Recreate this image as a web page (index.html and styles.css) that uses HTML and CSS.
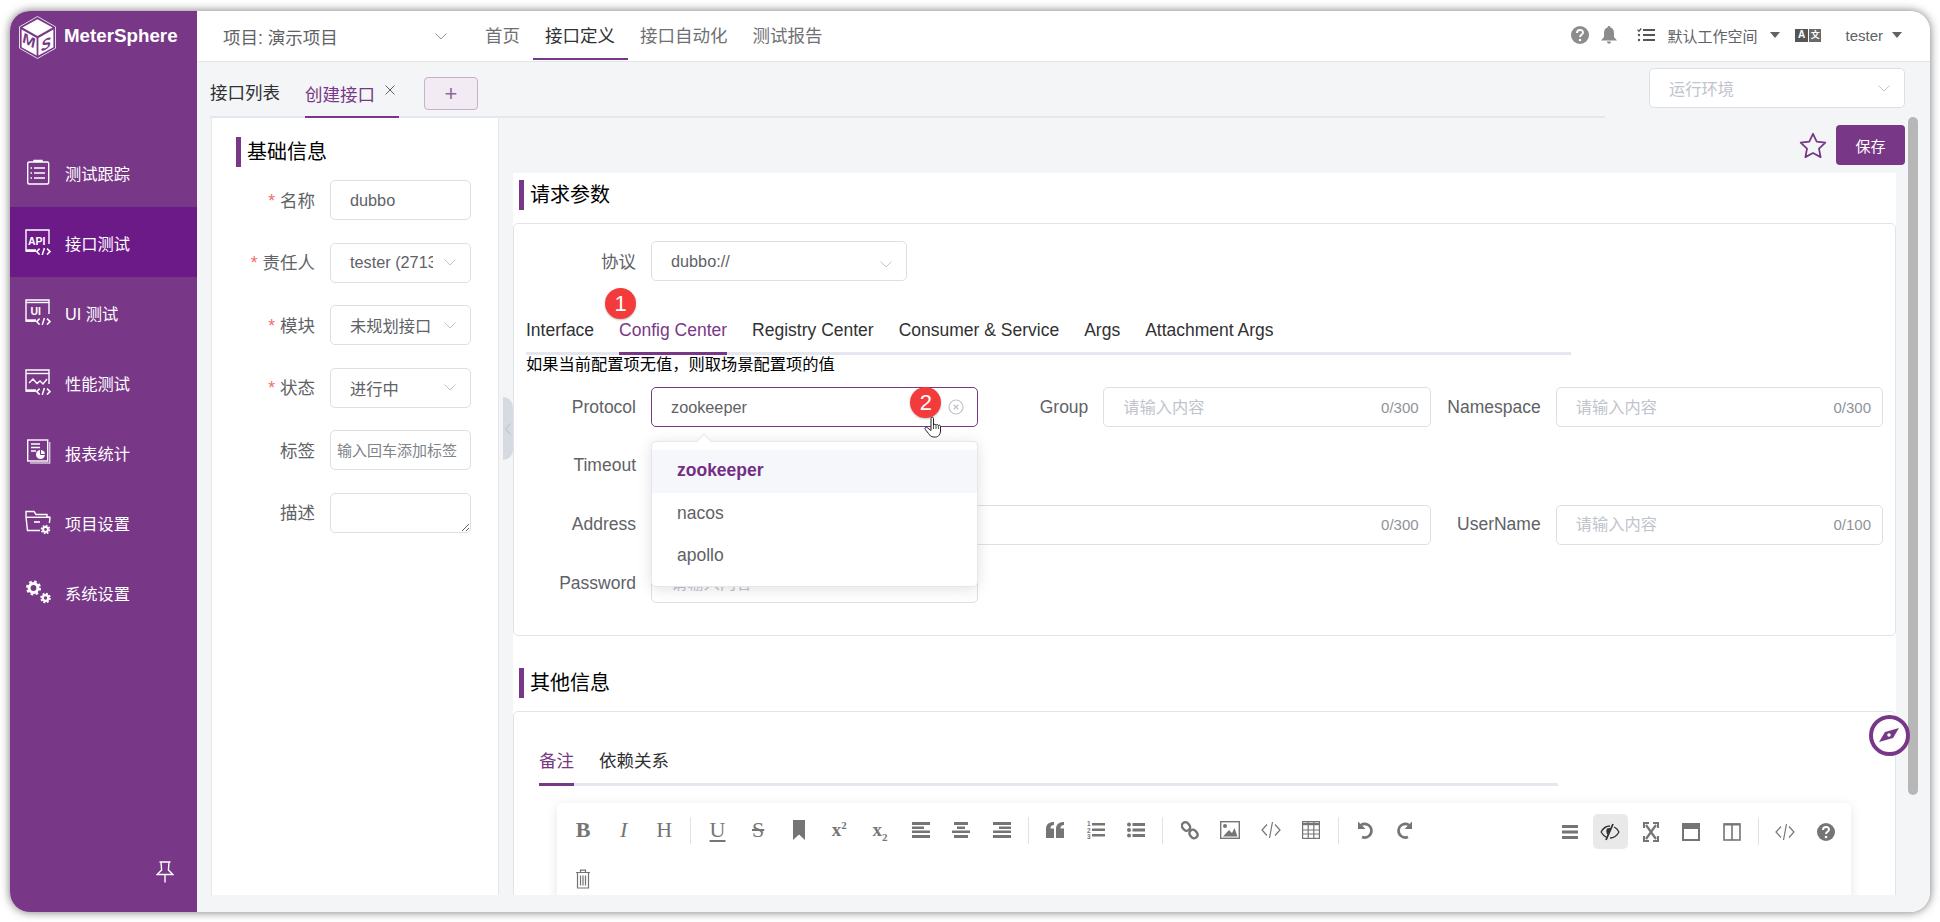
FILE: index.html
```html
<!DOCTYPE html>
<html>
<head>
<meta charset="utf-8">
<title>MeterSphere</title>
<link rel="stylesheet" href="styles.css">
</head>
<body>
<div class="window">
	<aside class="aside">
		<div class="logo">
			<svg class="logo-mark" viewBox="0 0 37 43" width="37" height="43">
				<path d="M18.5 .5 36.5 10.8V32.2L18.5 42.5 .5 32.2V10.8Z" fill="none" stroke="#fff" stroke-width=".8"/>
				<path d="M18.5 3.2 33.6 11.6 18.5 20 3.4 11.6Z" fill="#fff"/>
				<path d="M2.6 13.6 17.6 22V39.6L2.6 31.2Z" fill="#fff"/>
				<path d="M19.4 22 34.4 13.6V31.2L19.4 39.6Z" fill="#fff"/>
				<text transform="matrix(1 .56 0 1 3.6 26)" class="logo-letter">M</text>
				<text transform="matrix(1 -.56 0 1 22 36)" class="logo-letter">S</text>
			</svg>
			<span class="logo-text">MeterSphere</span>
		</div>
		<nav class="side-menu">
			<a class="side-item">
				<svg viewBox="0 0 26 26" width="26" height="26" fill="none" stroke="#fff" stroke-width="1.4">
					<rect x="2.7" y="3" width="21" height="22" rx="1.5"/>
					<path d="M9 3V1.4H17V3" fill="#fff"/>
					<path d="M9 9H20M9 14H20M9 19H20M5.5 9H7M5.5 14H7M5.5 19H7"/>
				</svg>
				<span>测试跟踪</span>
			</a>
			<a class="side-item active">
				<svg viewBox="0 0 26 26" width="26" height="26" fill="none" stroke="#fff" stroke-width="1.4">
					<path d="M10 22H1V1H24V15"/>
					<path d="M1 21.5H11" stroke-width="2.4"/>
					<text x="3" y="15.500" class="side-glyph">API</text>
					<path d="M14.6 19.6 11.6 22.6 14.6 25.6M22 19.6 25 22.6 22 25.6M19.4 19 17.2 26" stroke-width="1.5"/>
				</svg>
				<span>接口测试</span>
			</a>
			<a class="side-item">
				<svg viewBox="0 0 26 26" width="26" height="26" fill="none" stroke="#fff" stroke-width="1.4">
					<path d="M10 22H1V1H24V15"/>
					<path d="M1 3.500H24"/>
					<path d="M1 21.5H11" stroke-width="2.4"/>
					<text x="5.500" y="16" class="side-glyph">UI</text>
					<path d="M14.6 19.6 11.6 22.6 14.6 25.6M22 19.6 25 22.6 22 25.6M19.4 19 17.2 26" stroke-width="1.5"/>
				</svg>
				<span>UI 测试</span>
			</a>
			<a class="side-item">
				<svg viewBox="0 0 26 26" width="26" height="26" fill="none" stroke="#fff" stroke-width="1.4">
					<path d="M10 22H1V1H24V15"/>
					<path d="M1 4.5H24"/>
					<path d="M1 21.5H11" stroke-width="2.4"/>
					<path d="M4 14 8 10 12 14.5 15 12 18 15 22 10"/>
					<path d="M14.6 19.6 11.6 22.6 14.6 25.6M22 19.6 25 22.6 22 25.6M19.4 19 17.2 26" stroke-width="1.5"/>
				</svg>
				<span>性能测试</span>
			</a>
			<a class="side-item">
				<svg viewBox="0 0 26 26" width="26" height="26" fill="none" stroke="#fff" stroke-width="1.4">
					<rect x="2.7" y="1" width="20" height="21"/>
					<path d="M24.7 3V24H5" stroke-opacity=".7"/>
					<path d="M6 5H15M6 8.5H15M6 12H11"/>
					<circle cx="15.5" cy="15.5" r="4.5" fill="#fff" stroke="none"/>
					<path d="M15.5 15.5V11M15.5 15.5H20" stroke="#783887" stroke-width="1"/>
				</svg>
				<span>报表统计</span>
			</a>
			<a class="side-item">
				<svg viewBox="0 0 26 26" width="26" height="26" fill="none" stroke="#fff" stroke-width="1.4">
					<path d="M15 21.5H2.5L1 8V2.5H9L11 5.5H22V8L25 8.4 24.4 14"/>
					<path d="M1 8.3H25"/>
					<path d="M9 13H15" stroke-width="1.6"/>
					<circle cx="20.5" cy="20.5" r="2.4" stroke-width="2"/>
					<circle cx="20.5" cy="20.5" r="4" stroke-width="1.6" stroke-dasharray="1.7 1.4"/>
				</svg>
				<span>项目设置</span>
			</a>
			<a class="side-item">
				<svg viewBox="0 0 26 26" width="26" height="26" fill="none" stroke="#fff">
					<circle cx="8.5" cy="9" r="4.4" stroke-width="3"/>
					<circle cx="8.5" cy="9" r="6.4" stroke-width="2.2" stroke-dasharray="2.6 2.4"/>
					<circle cx="20.5" cy="19" r="2.8" stroke-width="2.2"/>
					<circle cx="20.5" cy="19" r="4.4" stroke-width="1.8" stroke-dasharray="1.9 1.55"/>
				</svg>
				<span>系统设置</span>
			</a>
		</nav>
		<div class="pin">
			<svg viewBox="0 0 18 22" width="18" height="22" fill="none" stroke="#fff" stroke-width="1.4">
				<path d="M3.5 1H14.5M5 1 5.6 9 1.2 13.5H16.8L12.4 9 13 1M9 13.5V21.5"/>
			</svg>
		</div>
	</aside>

	<div class="main">
		<header class="topbar">
			<div class="project">
				<span>项目: 演示项目</span>
				<svg class="chevron" viewBox="0 0 12 7" width="12" height="7"><path d="M.5 .5 6 6 11.5 .5"/></svg>
			</div>
			<nav class="top-nav">
				<a class="top-item">首页</a>
				<a class="top-item active">接口定义</a>
				<a class="top-item">接口自动化</a>
				<a class="top-item">测试报告</a>
			</nav>
			<div class="top-right">
				<svg class="ic-help" viewBox="0 0 18 18" width="18" height="18">
					<circle cx="9" cy="9" r="9" fill="#8c8c8c"/>
					<path d="M6 7c0-4 6-4 6-.4 0 2.200-3 2.200-3 4.400" fill="none" stroke="#fff" stroke-width="2"/>
					<circle cx="9" cy="14" r="1.300" fill="#fff"/>
				</svg>
				<svg class="ic-bell" viewBox="0 0 16 18" width="16" height="18">
					<path d="M8 0C9 0 9.500 .6 9.500 1.500 12 2.200 13 4.500 13 7V11L16 14.500H0L3 11V7C3 4.500 4 2.200 6.500 1.500 6.500 .6 7 0 8 0ZM6 15.500H10C10 18.500 6 18.500 6 15.500Z" fill="#8c8c8c"/>
				</svg>
				<svg class="ic-check" viewBox="0 0 18 14" width="18" height="14" stroke="#555" fill="none">
					<path d="M6 2H18M6 7H18M6 12H18" stroke-width="1.800"/>
					<path d="M.5 1.800 2 3.200 4.200 .5" stroke-width="1.300"/>
					<circle cx="2" cy="7" r="1.200" fill="#555" stroke="none"/>
					<circle cx="2" cy="12" r="1.200" fill="#555" stroke="none"/>
				</svg>
				<span class="top-text workspace">默认工作空间</span>
				<i class="caret caret-workspace"></i>
				<div class="lang">
					<span class="lang-a">A</span><span class="lang-b">文</span>
				</div>
				<span class="top-text user">tester</span>
				<i class="caret caret-user"></i>
			</div>
		</header>

		<div class="content">
			<div class="tabs-row">
				<div class="api-tabs">
					<a class="api-tab">接口列表</a>
					<a class="api-tab active">创建接口<svg class="tab-close" viewBox="0 0 10 10" width="10" height="10"><path d="M.5 .5 9.500 9.500M9.500 .5 .5 9.500" stroke="#606266"/></svg></a>
					<button class="add-btn" type="button">+</button>
				</div>
				<div class="select env-select">
					<span class="select-value placeholder">运行环境</span>
					<svg class="chevron" viewBox="0 0 12 7" width="12" height="7"><path d="M.5 .5 6 6 11.5 .5"/></svg>
				</div>
			</div>

			<div class="work">
				<section class="base-info">
					<h3 class="section-title">基础信息</h3>
					<div class="base-form">
						<div class="base-row">
							<label class="base-label required">名称</label>
							<div class="input"><input type="text" value="dubbo"></div>
						</div>
						<div class="base-row">
							<label class="base-label required">责任人</label>
							<div class="select">
								<span class="select-value">tester (27131313)</span>
								<svg class="chevron" viewBox="0 0 12 7" width="12" height="7"><path d="M.5 .5 6 6 11.5 .5"/></svg>
							</div>
						</div>
						<div class="base-row">
							<label class="base-label required">模块</label>
							<div class="select">
								<span class="select-value">未规划接口</span>
								<svg class="chevron" viewBox="0 0 12 7" width="12" height="7"><path d="M.5 .5 6 6 11.5 .5"/></svg>
							</div>
						</div>
						<div class="base-row">
							<label class="base-label required">状态</label>
							<div class="select">
								<span class="select-value">进行中</span>
								<svg class="chevron" viewBox="0 0 12 7" width="12" height="7"><path d="M.5 .5 6 6 11.5 .5"/></svg>
							</div>
						</div>
						<div class="base-row">
							<label class="base-label">标签</label>
							<div class="input tag-input"><input type="text" placeholder="输入回车添加标签"></div>
						</div>
						<div class="base-row">
							<label class="base-label">描述</label>
							<textarea class="desc"></textarea>
						</div>
					</div>
				</section>

				<div class="gutter">
					<div class="collapse">
						<svg viewBox="0 0 6 12" width="6" height="12"><path d="M5.500 .5 .5 6 5.500 11.500" fill="none" stroke="#b4bac2"/></svg>
					</div>
				</div>

				<div class="detail">
					<div class="detail-head">
						<svg class="star" viewBox="0 0 28 27" width="28" height="27">
							<path d="M14 1.800 17.700 9.600 26.300 10.700 20 16.600 21.600 25.100 14 21 6.400 25.100 8 16.600 1.700 10.700 10.300 9.600Z" fill="none" stroke="#783887" stroke-width="1.800" stroke-linejoin="round"/>
						</svg>
						<button class="save-btn" type="button">保存</button>
					</div>

					<div class="panel">
						<h3 class="section-title">请求参数</h3>
						<div class="card params">
							<div class="protocol-row">
								<label class="form-label">协议</label>
								<div class="select protocol-select">
									<span class="select-value">dubbo://</span>
									<svg class="chevron low" viewBox="0 0 12 7" width="12" height="7"><path d="M.5 .5 6 6 11.5 .5"/></svg>
								</div>
							</div>

							<div class="tabs param-tabs">
								<a class="tab">Interface</a>
								<a class="tab active">Config Center<span class="badge badge-one">1</span></a>
								<a class="tab">Registry Center</a>
								<a class="tab">Consumer &amp; Service</a>
								<a class="tab">Args</a>
								<a class="tab">Attachment Args</a>
							</div>
							<p class="note">如果当前配置项无值，则取场景配置项的值</p>

							<div class="param-grid">
								<div class="field">
									<label class="form-label">Protocol</label>
									<div class="control">
										<div class="select focused">
											<span class="select-value">zookeeper</span>
											<svg class="clear" viewBox="0 0 16 16" width="16" height="16" fill="none" stroke="#c0c4cc">
												<circle cx="8" cy="8" r="7" stroke-width="1.200"/>
												<path d="M5.700 5.700 10.300 10.300M10.300 5.700 5.700 10.300" stroke-width="1.300"/>
											</svg>
										</div>
										<span class="badge badge-two">2</span>
										<svg class="hand" viewBox="0 0 18 22" width="18" height="22">
											<path d="M7 2.500C7 .8 9.500 .8 9.500 2.500V9C9.800 8 11.700 8 12 9.200 12.400 8.200 14.200 8.300 14.400 9.600 14.900 8.800 16.500 9.100 16.500 10.600V15C16.500 18 14.500 21 11.500 21H9.500C7 21 6 19.500 4.500 17.500L1.200 13.300C.2 11.800 2.200 10.600 3.400 11.800L7 14.500Z" fill="#fff" stroke="#222" stroke-width="1"/>
											<path d="M9.500 9V13M12 9.200V13M14.400 9.600V13" stroke="#222" stroke-width=".8"/>
										</svg>
										<ul class="dropdown">
											<li class="selected">zookeeper</li>
											<li>nacos</li>
											<li>apollo</li>
										</ul>
									</div>
								</div>
								<div class="field">
									<label class="form-label">Group</label>
									<div class="control input"><input type="text" placeholder="请输入内容"><span class="count">0/300</span></div>
								</div>
								<div class="field">
									<label class="form-label">Namespace</label>
									<div class="control input"><input type="text" placeholder="请输入内容"><span class="count">0/300</span></div>
								</div>

								<div class="field full-row">
									<label class="form-label">Timeout</label>
									<div class="control input timeout"><input type="text"></div>
								</div>

								<div class="field wide">
									<label class="form-label">Address</label>
									<div class="control input"><input type="text" placeholder="请输入内容"><span class="count">0/300</span></div>
								</div>
								<div class="field">
									<label class="form-label">UserName</label>
									<div class="control input"><input type="text" placeholder="请输入内容"><span class="count">0/100</span></div>
								</div>

								<div class="field full-row">
									<label class="form-label">Password</label>
									<div class="control input timeout"><input type="text" placeholder="请输入内容"></div>
								</div>
							</div>
						</div>

						<h3 class="section-title">其他信息</h3>
						<div class="card others">
							<div class="tabs other-tabs">
								<a class="tab active">备注</a>
								<a class="tab">依赖关系</a>
							</div>
							<div class="editor">
								<div class="toolbar">
									<div class="tools-left">
										<div class="tool-row">
											<span class="tool serif bold">B</span>
											<span class="tool serif italic">I</span>
											<span class="tool serif">H</span>
											<i class="tool-sep"></i>
											<span class="tool serif under">U</span>
											<span class="tool serif strike">S</span>
											<span class="tool"><svg viewBox="0 0 14 20" width="14" height="20"><path d="M1 0H13V20L7 14.500 1 20Z" fill="#757575"/></svg></span>
											<span class="tool serif script"><span>x<sup>2</sup></span></span>
											<span class="tool serif script"><span>x<sub>2</sub></span></span>
											<span class="tool"><svg viewBox="0 0 18 18" width="18" height="18" fill="#757575"><path d="M0 1H18V4H0ZM0 5.500H12V8H0ZM0 9.500H18V12H0ZM0 14H18V17H0Z"/></svg></span>
											<span class="tool"><svg viewBox="0 0 18 18" width="18" height="18" fill="#757575"><path d="M2 1H16V4H2ZM5 5.500H13V8H5ZM0 9.500H18V12H0ZM2 14H16V17H2Z"/></svg></span>
											<span class="tool"><svg viewBox="0 0 18 18" width="18" height="18" fill="#757575"><path d="M0 1H18V4H0ZM6 5.500H18V8H6ZM0 9.500H18V12H0ZM0 14H18V17H0Z"/></svg></span>
											<i class="tool-sep"></i>
											<span class="tool"><svg viewBox="0 0 18 16" width="18" height="16" fill="#757575"><path d="M8 0V3C5.500 3 4.500 4.500 4.500 6.500H8V16H0V7C0 2.500 3 0 8 0ZM18 0V3C15.500 3 14.500 4.500 14.500 6.500H18V16H10V7C10 2.500 13 0 18 0Z"/></svg></span>
											<span class="tool"><svg viewBox="0 0 18 20" width="18" height="20" fill="#757575"><path d="M5 3H18V5.500H5ZM5 8.500H18V11H5ZM5 14H18V16.500H5Z"/><text x="0" y="6" class="ol-num">1</text><text x="0" y="12.500" class="ol-num">2</text><text x="0" y="19" class="ol-num">3</text></svg></span>
											<span class="tool"><svg viewBox="0 0 18 16" width="18" height="16" fill="#757575"><circle cx="2" cy="2.500" r="2"/><circle cx="2" cy="8" r="2"/><circle cx="2" cy="13.500" r="2"/><path d="M5.500 1H18V4H5.500ZM5.500 6.500H18V9.500H5.500ZM5.500 12H18V15H5.500Z"/></svg></span>
											<i class="tool-sep"></i>
											<span class="tool"><svg viewBox="0 0 18 20" width="18" height="20" fill="none" stroke="#757575" stroke-width="2.400"><rect x="1.500" y="2" width="7" height="9" rx="3.500" transform="rotate(-40 5 6.500)"/><rect x="9" y="9.500" width="7" height="9" rx="3.500" transform="rotate(-40 12.500 14)"/></svg></span>
											<span class="tool"><svg viewBox="0 0 20 18" width="20" height="18"><rect x=".7" y=".7" width="18.600" height="16.600" fill="none" stroke="#757575" stroke-width="1.400"/><circle cx="5" cy="5" r="2" fill="#757575"/><path d="M3 15.500 9 9 12 12 14.500 7 17.500 15.500Z" fill="#757575"/></svg></span>
											<span class="tool"><svg viewBox="0 0 20 18" width="20" height="18" fill="none" stroke="#757575" stroke-width="1.200"><path d="M6 3.500 1 9 6 14.500M14 3.500 19 9 14 14.500M11.500 1 8.500 17"/></svg></span>
											<span class="tool"><svg viewBox="0 0 18 18" width="18" height="18" fill="none" stroke="#757575" stroke-width="1.200"><rect x=".6" y=".6" width="16.800" height="16.800"/><path d="M.6 3H17.400" stroke-width="2.400"/><path d="M.6 9H17.400M.6 13H17.400M6.200 .6V17.400M11.800 .6V17.400"/></svg></span>
											<i class="tool-sep"></i>
											<span class="tool"><svg viewBox="0 0 16 18" width="16" height="18"><path d="M4 4A6.800 6.800 0 1 1 5 16" fill="none" stroke="#757575" stroke-width="2.600"/><path d="M1 .5V8H8.500Z" fill="#757575"/></svg></span>
											<span class="tool"><svg viewBox="0 0 16 18" width="16" height="18"><path d="M12 4A6.800 6.800 0 1 0 11 16" fill="none" stroke="#757575" stroke-width="2.600"/><path d="M15 .5V8H7.500Z" fill="#757575"/></svg></span>
										</div>
										<div class="tool-row trash-row">
											<span class="tool"><svg viewBox="0 0 14 20" width="14" height="20" fill="none" stroke="#757575" stroke-width="1.200"><path d="M0 3.500H14M4.500 3.500V1.200H9.500V3.500"/><path d="M1.500 3.500V19H12.500V3.500"/><path d="M4.500 6.500V16.500M7 6.500V16.500M9.500 6.500V16.500"/></svg></span>
										</div>
									</div>
									<div class="tools-right">
										<span class="tool"><svg viewBox="0 0 16 16" width="16" height="16" fill="#757575"><path d="M0 1H16V4H0ZM0 6.500H16V9.500H0ZM0 12H16V15H0Z"/></svg></span>
										<span class="tool on"><svg viewBox="0 0 20 18" width="20" height="18" fill="none" stroke="#333" stroke-width="1.300"><path d="M1 9C4 3.500 8 3 10 3M19 9C16 14.500 12 15 10 15"/><path d="M1 9C3 12.500 5.500 14 7.500 14.800M19 9C17.500 6 15.500 4.500 14 4" /><path d="M13 1 6 17" stroke-width="1.800"/><path d="M7 5.500C6 7 6 10 7.500 12L11 5C9.500 4.800 8 4.800 7 5.500Z" fill="#333" stroke="none"/></svg></span>
										<span class="tool"><svg viewBox="0 0 16 20" width="16" height="20" fill="none" stroke="#757575" stroke-width="2.200"><path d="M3 3 13 17M13 3 3 17"/><path d="M1 6V1H6M10 1H15V6M1 14V19H6M10 19H15V14" stroke-width="2"/></svg></span>
										<span class="tool"><svg viewBox="0 0 18 18" width="18" height="18"><rect x="1" y="1" width="16" height="16" fill="none" stroke="#757575" stroke-width="2"/><path d="M1 1H17V6H1Z" fill="#757575"/></svg></span>
										<span class="tool"><svg viewBox="0 0 18 18" width="18" height="18" fill="none" stroke="#757575" stroke-width="1.600"><rect x="1" y="1" width="16" height="16"/><path d="M1 1.500H17" stroke-width="2"/><path d="M9 1V17"/></svg></span>
										<i class="tool-sep"></i>
										<span class="tool"><svg viewBox="0 0 20 18" width="20" height="18" fill="none" stroke="#757575" stroke-width="1.200"><path d="M6 3.500 1 9 6 14.500M14 3.500 19 9 14 14.500M11.500 1 8.500 17"/></svg></span>
										<span class="tool"><svg viewBox="0 0 18 18" width="18" height="18"><circle cx="9" cy="9" r="9" fill="#757575"/><path d="M6 7c0-4 6-4 6-.4 0 2.200-3 2.200-3 4.400" fill="none" stroke="#fff" stroke-width="2"/><circle cx="9" cy="14" r="1.300" fill="#fff"/></svg></span>
									</div>
								</div>
							</div>
						</div>
					</div>
				</div>
			</div>
		</div>
	</div>

	<div class="scroll-thumb"></div>
	<div class="compass">
		<svg viewBox="0 0 20 14" width="20" height="14"><path d="M20 0 14 10 0 14 6 4Z" fill="#783887"/><circle cx="10" cy="7" r="1.800" fill="#fff"/></svg>
	</div>
</div>
</body>
</html>
```
FILE: styles.css
```css
* { box-sizing: border-box; }
html, body {
	margin: 0;
	height: 100%;
	overflow: hidden;
	background: #fff;
}
body {
	font-family: "Liberation Sans", "Noto Sans CJK SC", sans-serif;
	font-size: 16.25px;
	color: #606266;
	padding: 11px 10px 10px;
}
a { color: inherit; text-decoration: none; }
h3, p, ul { margin: 0; padding: 0; }
input, textarea, button { font-family: inherit; }

.window {
	position: relative;
	display: flex;
	height: 901px;
	border-radius: 20px;
	overflow: hidden;
	box-shadow: 0 0 10px rgba(0,0,0,0.55);
}

/* sidebar */
.aside {
	flex: 0 0 187px;
	display: flex;
	flex-direction: column;
	background: #783887;
	color: #fff;
}
.logo {
	display: flex;
	align-items: center;
	height: 50px;
	padding-left: 9px;
}
.logo-mark { margin-top: 3px; }
.logo-letter {
	font-size: 15px;
	font-weight: bold;
	font-style: italic;
	fill: #783887;
}
.logo-text {
	margin-left: 8px;
	margin-top: -1px;
	font-size: 18.75px;
	font-weight: bold;
}
.side-menu { margin-top: 76px; }
.side-item {
	display: flex;
	align-items: center;
	gap: 14px;
	height: 70px;
	padding-left: 15px;
}
.side-item span { margin-top: 2px; }
.side-item.active { background: #6c1a88; }
.side-glyph {
	font-size: 10.5px;
	font-weight: bold;
	fill: #fff;
	stroke: none;
}
.pin {
	margin-top: auto;
	padding: 0 0 29px 146px;
	line-height: 0;
}

/* top bar */
.main {
	flex: 1;
	min-width: 0;
	display: flex;
	flex-direction: column;
}
.topbar {
	flex: 0 0 51px;
	display: flex;
	background: #fff;
	border-bottom: 1px solid #e6e6e6;
	padding-left: 26px;
}
.project {
	flex: 0 0 223.500px;
	display: flex;
	align-items: center;
	justify-content: space-between;
	height: 50px;
	margin-right: 26px;
	font-size: 17.5px;
}
.project .chevron { stroke: #909399; }
.top-nav { display: flex; }
.top-item {
	height: 49px;
	line-height: 50px;
	padding: 0 12.5px;
	font-size: 17.5px;
	color: #6f7073;
}
.top-item.active {
	color: #303133;
	border-bottom: 2px solid #783887;
}
.top-right {
	display: flex;
	align-items: center;
	height: 48px;
	margin-left: auto;
	padding-right: 28px;
}
.ic-bell { margin-left: 12px; }
.ic-check { margin-left: 20px; }
.top-text { font-size: 15px; color: #606266; }
.workspace { margin-left: 12px; }
.caret {
	width: 0;
	height: 0;
	border-left: 5px solid transparent;
	border-right: 5px solid transparent;
	border-top: 6px solid #606266;
}
.caret-workspace { margin-left: 13px; }
.caret-user { margin-left: 9px; }
.lang {
	display: flex;
	gap: 1px;
	margin-left: 15px;
	margin-right: -1px;
	font-size: 10px;
	font-weight: bold;
	color: #fff;
	line-height: 12px;
}
.lang-a, .lang-b {
	width: 12.5px;
	height: 13px;
	text-align: center;
	background: #555;
}
.lang-b { background: #6a6a6a; font-size: 9px; }
.user { margin-left: 25px; }

/* content */
.content {
	flex: 1;
	min-height: 0;
	display: flex;
	flex-direction: column;
	background: #f4f5f7;
	padding: 0 0 17px 13px;
}
.tabs-row {
	flex: 0 0 56px;
	display: flex;
}
.api-tabs {
	flex: 0 0 1395px;
	display: flex;
	align-items: flex-start;
	height: 56px;
	border-bottom: 2px solid #e4e7ed;
}
.api-tab {
	height: 56px;
	line-height: 63px;
	margin-right: 25px;
	font-size: 17.5px;
	color: #303133;
}
.api-tab.active {
	padding-right: 4px;
	color: #783887;
	border-bottom: 2px solid #783887;
	line-height: 66px;
}
.tab-close {
	margin-left: 10px;
	vertical-align: 6px;
}
.add-btn {
	width: 54px;
	height: 33px;
	margin-top: 15px;
	padding: 0;
	background: #f2ebf4;
	border: 1px solid #c9afcf;
	border-radius: 4px;
	font-size: 22px;
	font-weight: normal;
	line-height: 28px;
	color: #93689c;
}
.env-select {
	flex: 0 0 256px;
	margin: 6px 0 0 44px;
}
.placeholder { color: #c0c4cc; }

.work {
	flex: 1;
	min-height: 0;
	display: flex;
	padding-left: 1px;
}
.section-title {
	height: 30px;
	line-height: 30px;
	margin: 0 0 13px 6px;
	padding-left: 6px;
	border-left: 5px solid #783887;
	font-size: 20px;
	font-weight: normal;
	color: #000;
}

/* base info */
.base-info {
	flex: 0 0 288px;
	min-width: 0;
	background: #fff;
	border-left: 1px solid #e6e6e6;
	border-right: 1px solid #e6e6e6;
	padding-top: 19px;
}
.base-info .section-title { margin-left: 24px; }
.base-form {
	display: flex;
	flex-direction: column;
	gap: 22.5px;
}
.base-row {
	display: flex;
	align-items: center;
	gap: 15px;
}
.base-row .input, .base-row .select, .desc { flex: 0 0 141px; }
.base-label {
	flex: 0 0 103px;
	margin-top: -2px;
	text-align: right;
	font-size: 17.5px;
}
.required::before {
	content: "*";
	color: #f56c6c;
	margin-right: 5px;
}
.input, .select {
	display: flex;
	align-items: center;
	min-width: 0;
	height: 40px;
	background: #fff;
	border: 1px solid #dcdfe6;
	border-radius: 5px;
}
.input input {
	flex: 1;
	width: 0;
	min-width: 0;
	height: 100%;
	padding: 0 19px;
	border: none;
	outline: none;
	background: transparent;
	font-size: 16.25px;
	color: #606266;
}
.input input::placeholder { color: #c0c4cc; }
.tag-input input { padding: 0 6px; font-size: 15px; }
.tag-input input::placeholder { color: #808389; }
.select { padding: 0 14px 0 19px; }
.select-value {
	flex: 1;
	min-width: 0;
	overflow: hidden;
	white-space: nowrap;
	margin-right: 11px;
}
.chevron {
	flex: none;
	fill: none;
	stroke: #c0c4cc;
}
.chevron.low { margin-top: 6px; }
.desc {
	height: 40px;
	min-width: 0;
	padding: 6px 10px;
	border: 1px solid #dcdfe6;
	border-radius: 5px;
	outline: none;
	resize: vertical;
}

.gutter { flex: 0 0 14px; }
.collapse {
	display: flex;
	align-items: center;
	justify-content: center;
	width: 10px;
	height: 63px;
	margin: 279px 0 0 4px;
	background: #d5dbe0;
	border-radius: 0 10px 10px 0;
}

/* detail column */
.detail {
	flex: 1;
	min-width: 0;
	display: flex;
	flex-direction: column;
	padding-right: 34px;
}
.detail-head {
	flex: 0 0 55px;
	display: flex;
	align-items: flex-start;
	justify-content: flex-end;
	padding-top: 7px;
	margin-right: -9px;
}
.star { margin: 7px 9px 0 0; }
.save-btn {
	width: 69px;
	height: 40px;
	background: #783887;
	border: none;
	border-radius: 4px;
	font-size: 15px;
	color: #fff;
}
.panel {
	flex: 1;
	min-height: 0;
	overflow: hidden;
	background: #fff;
	padding-top: 7px;
}
.card {
	border: 1px solid #e1e3ea;
	border-radius: 5px;
}
.params {
	padding: 17px 12px 32px;
	margin-bottom: 32px;
}
.form-label {
	flex: 0 0 110px;
	text-align: right;
	font-size: 17.5px;
}
.protocol-row {
	display: flex;
	align-items: center;
	gap: 15px;
}
.protocol-row .form-label { margin-top: -2px; }
.protocol-select { flex: 0 0 256px; }

.tabs {
	display: flex;
	gap: 25px;
	border-bottom: 3px solid #e4e7ed;
}
.param-tabs {
	width: 1045px;
	margin-top: 25px;
}
.tab {
	position: relative;
	height: 46px;
	line-height: 48px;
	font-size: 17.5px;
	color: #303133;
}
.tab.active { color: #783887; }
.tab.active::after {
	content: "";
	position: absolute;
	left: 0;
	right: 0;
	bottom: -3px;
	height: 3px;
	background: #783887;
}
.badge {
	position: absolute;
	display: block;
	width: 31px;
	height: 31px;
	border-radius: 50%;
	background: #f33b3b;
	color: #fff;
	font-size: 22px;
	font-weight: normal;
	line-height: 31px;
	text-align: center;
	box-shadow: 0 1px 2px rgba(0,0,0,0.25);
	z-index: 3;
}
.badge-one { left: -14px; top: -18px; }
.badge-two { right: 37px; top: 0; }
.hand {
	position: absolute;
	left: 273px;
	top: 29px;
	z-index: 4;
}
.note {
	line-height: 19px;
	font-size: 16.25px;
	color: #000;
}
.param-grid {
	display: grid;
	grid-template-columns: repeat(3, minmax(0, 1fr));
	row-gap: 18.75px;
	margin-top: 13px;
}
.field {
	display: flex;
	align-items: center;
	gap: 15px;
}
.field.wide { grid-column: span 2; }
.field.full-row { grid-column: 1 / -1; }
.control {
	position: relative;
	flex: 1;
	min-width: 0;
}
.timeout { flex: 0 0 327px; }
.select.focused { border-color: #783887; padding-right: 8px; }
.clear { flex: none; margin-right: 5px; }
.count {
	flex: none;
	padding-right: 11px;
	font-size: 15px;
	color: #909399;
}
.dropdown {
	position: absolute;
	left: 0;
	right: 0;
	top: 54px;
	padding: 8px 0;
	list-style: none;
	background: #fff;
	border: 1px solid #e4e7ed;
	border-radius: 5px;
	box-shadow: 0 2px 15px rgba(0,0,0,0.12);
	z-index: 2;
}
.dropdown::before {
	content: "";
	position: absolute;
	left: 46px;
	top: -6px;
	width: 11px;
	height: 11px;
	background: #fff;
	border-top: 1px solid #e4e7ed;
	border-left: 1px solid #e4e7ed;
	transform: rotate(45deg);
}
.dropdown li {
	position: relative;
	height: 42.5px;
	line-height: 41px;
	padding-left: 25px;
	font-size: 17.5px;
}
.dropdown li.selected {
	background: #f5f7fa;
	color: #742e86;
	font-weight: bold;
}

/* second card */
.others {
	padding: 25px 0 0 25px;
	height: 400px;
}
.other-tabs { width: 1019px; }
.editor {
	width: 1294px;
	height: 200px;
	margin: 17px 0 0 18px;
	background: #fff;
	border-radius: 5px;
	box-shadow: 0 2px 12px rgba(0,0,0,0.1);
}
.toolbar {
	display: flex;
	justify-content: space-between;
	padding: 9.5px 5px 0 5.7px;
}
.tool-row, .tools-right {
	display: flex;
	align-items: center;
}
.tools-right { margin-top: 1.5px; align-self: flex-start; }
.trash-row { margin-top: 14px; }
.tool {
	display: flex;
	align-items: center;
	justify-content: center;
	flex: none;
	width: 35px;
	height: 35px;
	margin: 0 2.8px;
	border-radius: 5px;
	color: #757575;
}
.tool.on { background: #e9e9e9; }
.tool-sep {
	flex: none;
	width: 1px;
	height: 27px;
	margin: 0 5.9px;
	background: #e2e2e2;
}
.tools-right .tool-sep { margin: 0 5.75px; }
.serif {
	font-family: "Liberation Serif", serif;
	font-size: 22px;
}
.bold { font-weight: bold; }
.italic { font-style: italic; }
.under { text-decoration: underline; text-underline-offset: 3px; }
.strike { text-decoration: line-through; }
.script { font-weight: bold; font-size: 19px; }
.script sup, .script sub { font-size: 11px; line-height: 0; }
.ol-num {
	font-family: "Liberation Sans", sans-serif;
	font-size: 6.500px;
	font-weight: bold;
}

/* overlays */
.scroll-thumb {
	position: absolute;
	right: 12px;
	top: 106px;
	width: 10px;
	height: 678px;
	background: #b7b7b7;
	border-radius: 5px;
}
.compass {
	position: absolute;
	left: 1858.500px;
	top: 703.500px;
	display: flex;
	align-items: center;
	justify-content: center;
	width: 41px;
	height: 41px;
	background: #fff;
	border: 4px solid #783887;
	border-radius: 50%;
}
```
